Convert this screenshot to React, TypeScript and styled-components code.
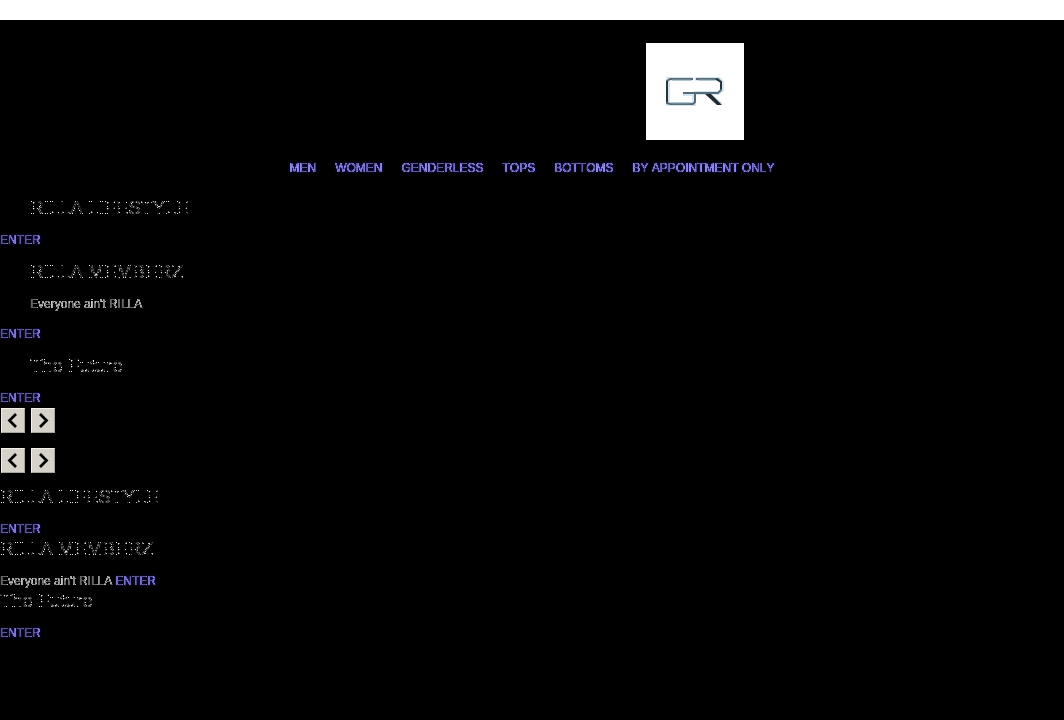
import React from "react";
import styled, { createGlobalStyle } from "styled-components";

const GlobalStyle = createGlobalStyle`
  * { box-sizing: border-box; }
  html { background: #000; }
  body {
    margin: 0;
    background: #000;
    color: #fff;
    font: 12px/16px "Liberation Sans", Arial, sans-serif;
    font-kerning: none;
  }
`;

const Announcement = styled.div`
  height: 20px;
  background: #fff;
`;

const Header = styled.header`
  padding-top: 23px;
`;

const LogoLink = styled.a`
  display: block;
  width: 98px;
  height: 97px;
  margin-left: calc(50% + 114px);
  background: #fff;
`;

const Nav = styled.nav`
  display: flex;
  justify-content: center;
  gap: 19px;
  padding-top: 20px;
`;

const TextLink = styled.a`
  color: #b0aaff;
  text-decoration: none;
  filter: url(#contour-link) drop-shadow(0 0 1px #2a1cd8);
`;

const Slides = styled.section`
  display: flex;
  flex-direction: column;
  gap: 12px;
  padding: 20px 0 2px;
`;

const Slide = styled.article`
  display: flex;
  flex-direction: column;
  align-items: flex-start;
  gap: 12px;
`;

const Title = styled.h2<{ $inset?: boolean }>`
  margin: 0;
  padding-left: ${(p) => (p.$inset ? 30 : 0)}px;
  font-size: 19px;
  font-weight: 400;
  line-height: 24px;
  filter: url(#contour);
`;

const Caption = styled.p<{ $inset?: boolean }>`
  margin: 0;
  padding: ${(p) => (p.$inset ? "0 0 2px 30px" : "0")};
  filter: url(#contour-soft);
`;

const ControlBars = styled.div`
  display: flex;
  flex-direction: column;
  gap: 15px;
  padding: 0 1px 12px;
`;

const Controls = styled.div`
  display: flex;
  gap: 6px;
`;

const ArrowButton = styled.button`
  display: grid;
  place-items: center;
  width: 24px;
  height: 25px;
  padding: 0;
  border: 1px solid;
  border-color: #f4f2ec #aaa69e #aaa69e #f4f2ec;
  background: #d6d2ca;
  color: #000;
`;

const List = styled.section`
  display: flex;
  flex-direction: column;
`;

const ListItem = styled.article`
  display: flex;
  flex-direction: column;
  align-items: flex-start;
  gap: 12px;
`;

const ListBody = styled.div`
  display: flex;
  gap: 3px;
`;

const FilterDefs = styled.svg`
  position: absolute;
`;

/* Lettering effects: headings keep only corners and slanted edges, small text keeps a bright rim. */
const Filters = () => (
  <FilterDefs width="0" height="0" aria-hidden="true">
    <filter id="contour" x="0" y="0" width="100%" height="100%" colorInterpolationFilters="sRGB">
      <feConvolveMatrix in="SourceGraphic" order="3" kernelMatrix="1 0 -1 0 0 0 -1 0 1" divisor="1" result="rising" />
      <feConvolveMatrix in="SourceGraphic" order="3" kernelMatrix="-1 0 1 0 0 0 1 0 -1" divisor="1" result="falling" />
      <feMerge result="corners">
        <feMergeNode in="rising" />
        <feMergeNode in="falling" />
      </feMerge>
      <feComponentTransfer in="SourceGraphic" result="rim">
        <feFuncA type="table" tableValues="0 0.8 1 0.9 0.1" />
      </feComponentTransfer>
      <feComposite in="rim" in2="corners" operator="in" />
    </filter>
    <filter id="contour-soft" x="0" y="0" width="100%" height="100%" colorInterpolationFilters="sRGB">
      <feComponentTransfer>
        <feFuncA type="table" tableValues="0 0.5 0.8 0.6 0.4" />
      </feComponentTransfer>
    </filter>
    <filter id="contour-link" x="0" y="0" width="100%" height="100%" colorInterpolationFilters="sRGB">
      <feComponentTransfer>
        <feFuncA type="table" tableValues="0 0.4 0.8 0.7 0.5" />
      </feComponentTransfer>
    </filter>
  </FilterDefs>
);

const Logo = () => (
  <svg width="98" height="97" viewBox="0 0 98 97" fill="none" aria-hidden="true">
    <g stroke="#d3e6f0" strokeWidth="4">
      <path d="M47 36H22V61H48V51H37" />
      <path d="M49 36H73L76 39V47L72 50H48M61 50L75 61" />
    </g>
    <g stroke="#566a78" strokeWidth="2">
      <path d="M47 36H24L21 38V60L24 61H47L49 59V51" />
      <path d="M50 36H72L75 39V47L72 50H37" />
      <path d="M21 38V59M70 36L75 39V46" stroke="#26343e" />
      <path d="M59 51H65L76 62H71Z" fill="#202a32" stroke="none" />
    </g>
    <path d="M26 37H45M53 37H69M25 60H44" stroke="#8ca6b5" />
  </svg>
);

const Arrow = ({ next }: { next?: boolean }) => (
  <svg width="14" height="17" viewBox="0 0 14 17" fill="none" stroke="currentColor" strokeWidth="2.8" aria-hidden="true">
    <path d={next ? "M4 2L10.5 8.5L4 15" : "M10 2L3.5 8.5L10 15"} />
  </svg>
);

const SlideControls = () => (
  <Controls>
    <ArrowButton type="button" aria-label="Previous"><Arrow /></ArrowButton>
    <ArrowButton type="button" aria-label="Next"><Arrow next /></ArrowButton>
  </Controls>
);

const menu = ["MEN", "WOMEN", "GENDERLESS", "TOPS", "BOTTOMS", "BY APPOINTMENT ONLY"];

const features = [
  { title: "RILLA LIFESTYLE" },
  { title: "RILLA MEMBERZ", caption: "Everyone ain't RILLA" },
  { title: "The Future" },
];

export default function App() {
  return (
    <>
      <GlobalStyle />
      <Filters />
      <Announcement />
      <Header>
        <LogoLink href="#" aria-label="GR"><Logo /></LogoLink>
        <Nav>
          {menu.map((m) => <TextLink key={m} href="#">{m}</TextLink>)}
        </Nav>
      </Header>
      <main>
        <Slides>
          {features.map((f) => (
            <Slide key={f.title}>
              <Title $inset>{f.title}</Title>
              {f.caption && <Caption $inset>{f.caption}</Caption>}
              <TextLink href="#">ENTER</TextLink>
            </Slide>
          ))}
        </Slides>
        <ControlBars>
          <SlideControls />
          <SlideControls />
        </ControlBars>
        <List>
          {features.map((f) => (
            <ListItem key={f.title}>
              <Title>{f.title}</Title>
              <ListBody>
                {f.caption && <Caption>{f.caption}</Caption>}
                <TextLink href="#">ENTER</TextLink>
              </ListBody>
            </ListItem>
          ))}
        </List>
      </main>
    </>
  );
}
